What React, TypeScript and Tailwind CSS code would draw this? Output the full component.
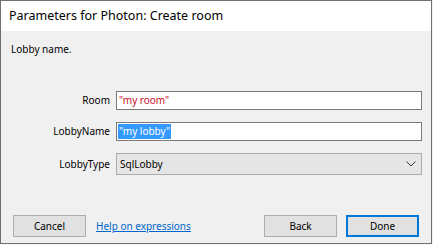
import React from "react";

export default function App() {
  const font = { fontFamily: '"Noto Sans", "Segoe UI", Arial, sans-serif' };
  return (
    <div className="w-[433px] h-[245px] bg-[#f3f3f3]" style={font}>
      <div className="w-[432px] h-[244px] border border-[#707070] flex flex-col bg-[#f0f0f0]">
        <div className="h-[30px] bg-white flex items-center pl-[8px] text-[12.5px] text-black leading-none">
          Parameters for Photon: Create room
        </div>
        <div className="flex-1 flex flex-col">
          <div className="pl-[10px] pt-[11px] text-[10px] leading-[14px] text-black">Lobby name.</div>
          <div className="mt-[35px] flex flex-col gap-[12px] pr-[9px]">
            <div className="flex items-center">
              <div className="w-[109px] text-right text-[10px] text-black">Room</div>
              <div className="ml-[6px] flex-1 h-[19px] border border-[#7a7a7a] bg-white flex items-center pl-[2px] text-[10px] text-[#c8102e]">
                "my room"
              </div>
            </div>
            <div className="flex items-center">
              <div className="w-[109px] text-right text-[10px] text-black">LobbyName</div>
              <div className="ml-[6px] flex-1 h-[19px] border border-[#7a7a7a] bg-white flex items-center pl-[1px] text-[10px]">
                <span className="bg-[#3399ff] text-white leading-[15px] px-[1px]">"my lobby"</span>
              </div>
            </div>
            <div className="flex items-center">
              <div className="w-[109px] text-right text-[10px] text-black">LobbyType</div>
              <div className="ml-[6px] flex-1 h-[22px] border border-[#adadad] bg-[#e5e5e5] flex items-center justify-between pl-[3px] pr-[5px] text-[10px] text-black">
                <span>SqlLobby</span>
                <svg width="10" height="6" viewBox="0 0 10 6" fill="none">
                  <path d="M0.5 0.5 L5 5 L9.5 0.5" stroke="#333" strokeWidth="1" />
                </svg>
              </div>
            </div>
          </div>
          <div className="mt-auto mb-[6px] flex items-center px-[12px] text-[10px]">
            <button className="w-[73px] h-[22px] border border-[#adadad] bg-[#e1e1e1] text-black">Cancel</button>
            <a className="ml-[10px] text-[#0066cc] underline">Help on expressions</a>
            <div className="flex-1" />
            <button className="w-[73px] h-[22px] border border-[#adadad] bg-[#e1e1e1] text-black">Back</button>
            <button className="ml-[9px] w-[73px] h-[22px] border-2 border-[#0078d7] bg-[#e1e1e1] text-black">Done</button>
          </div>
        </div>
      </div>
    </div>
  );
}
